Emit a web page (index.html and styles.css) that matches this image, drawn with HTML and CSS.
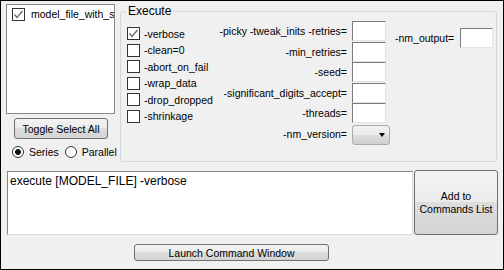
FILE: index.html
```html
<!DOCTYPE html>
<html lang="en">

<head>
    <meta charset="UTF-8">
    <title>Execute</title>
    <link rel="stylesheet" href="styles.css">
</head>

<body>
    <div class="window">
        <div class="top">
            <div class="side">
                <div class="listbox">
                    <div class="list-item">
                        <span class="check on"><svg width="11" height="11" viewBox="0 0 11 11"><polyline points="1.5,5.5 4,8.5 9.5,2" fill="none" stroke="#6b6b6b" stroke-width="1.3"/></svg></span>
                        <span>model_file_with_spaces</span>
                    </div>
                </div>
                <button class="btn toggle">Toggle Select All</button>
                <div class="radios">
                    <label class="radio"><span class="dot on"></span>Series</label>
                    <label class="radio"><span class="dot"></span>Parallel</label>
                </div>
            </div>

            <fieldset class="group">
                <legend>Execute</legend>
                <div class="group-body">
                    <div class="opts">
                        <div class="opt"><span class="check on"><svg width="11" height="11" viewBox="0 0 11 11"><polyline points="1.5,5.5 4,8.5 9.5,2" fill="none" stroke="#6b6b6b" stroke-width="1.3"/></svg></span>-verbose</div>
                        <div class="opt"><span class="check"></span>-clean=0</div>
                        <div class="opt"><span class="check"></span>-abort_on_fail</div>
                        <div class="opt"><span class="check"></span>-wrap_data</div>
                        <div class="opt"><span class="check"></span>-drop_dropped</div>
                        <div class="opt"><span class="check"></span>-shrinkage</div>
                    </div>
                    <div class="params">
                        <span class="plabel">-picky -tweak_inits -retries=</span><input class="field" type="text">
                        <span class="plabel">-min_retries=</span><input class="field" type="text">
                        <span class="plabel">-seed=</span><input class="field" type="text">
                        <span class="plabel">-significant_digits_accept=</span><input class="field" type="text">
                        <span class="plabel">-threads=</span><input class="field" type="text">
                        <span class="plabel">-nm_version=</span>
                        <div class="select"><span class="arrow"></span></div>
                    </div>
                    <div class="nm-out">
                        <span>-nm_output=</span><input class="field" type="text">
                    </div>
                </div>
            </fieldset>
        </div>

        <div class="command">
            <textarea class="cmd-text" readonly>execute [MODEL_FILE] -verbose</textarea>
            <button class="btn add">Add to<br>Commands List</button>
        </div>

        <div class="launch-row">
            <button class="btn launch">Launch Command Window</button>
        </div>
    </div>
</body>

</html>
```

FILE: styles.css
```css
* {
    box-sizing: border-box;
}

body {
    margin: 0;
    font-family: "Liberation Sans", Arial, sans-serif;
    font-size: 10.5px;
    color: #000;
}

.window {
    width: 504px;
    height: 270px;
    border: 1px solid #000;
    background-color: #f0f0f0;
    padding: 3px 5px 0 5px;
}

.top {
    display: flex;
    height: 158px;
}

.side {
    width: 109px;
    flex: none;
}

.listbox {
    height: 110px;
    border: 1px solid #828790;
    background-color: #fff;
    padding: 3px 0 0 5px;
    overflow: hidden;
}

.list-item {
    display: flex;
    align-items: center;
    gap: 6px;
    white-space: nowrap;
    line-height: 13px;
}

.check {
    width: 13px;
    height: 13px;
    flex: none;
    border: 1px solid #333;
    background-color: #fff;
    display: inline-flex;
    align-items: center;
    justify-content: center;
}

.btn {
    border: 1px solid #707070;
    border-radius: 3px;
    background: linear-gradient(#f3f3f3, #ebebeb 50%, #dddddd 50%, #d3d3d3);
    font-family: inherit;
    font-size: 10.5px;
    color: #000;
    padding: 0;
}

.toggle {
    display: block;
    margin: 4px 0 0 8px;
    width: 94px;
    height: 21px;
}

.radios {
    display: flex;
    margin: 7px 0 0 6px;
    white-space: nowrap;
}

.radio {
    display: flex;
    align-items: center;
    gap: 5px;
    line-height: 12px;
    margin-right: 6px;
}

.dot {
    width: 12px;
    height: 12px;
    border-radius: 50%;
    border: 1px solid #333;
    background-color: #fff;
}

.dot.on {
    background: radial-gradient(circle, #111 0 2.6px, #fff 3.2px);
}

.group {
    margin: 0 0 0 5px;
    padding: 0;
    width: 377px;
    height: 158px;
    min-width: 0;
    border: 1px solid #d5d5d5;
    border-radius: 3px;
}

.group legend {
    font-size: 12px;
    line-height: 14px;
    margin-left: 5px;
    padding: 0 2px;
}

.group-body {
    display: flex;
    align-items: flex-start;
}

.opts {
    width: 88px;
    margin: 9px 0 0 6px;
    white-space: nowrap;
}

.opt {
    display: flex;
    align-items: center;
    gap: 4px;
    height: 13px;
    margin-bottom: 3.6px;
}

.params {
    display: grid;
    grid-template-columns: 132px 34px;
    column-gap: 5px;
    row-gap: 0.6px;
    align-items: center;
    margin-top: 3px;
}

.plabel {
    justify-self: end;
    white-space: nowrap;
}

.field {
    width: 34px;
    height: 20px;
    padding: 0;
    border: 1px solid;
    border-color: #7a7a7a #e3e3e3 #e3e3e3 #7a7a7a;
    background-color: #fff;
    font: inherit;
}

.select {
    width: 38px;
    height: 20px;
    margin-top: 1px;
    border: 1px solid #acacac;
    border-radius: 3px;
    background: linear-gradient(#f2f2f2, #ebebeb 50%, #dddddd 50%, #cfcfcf);
    display: flex;
    align-items: center;
    justify-content: flex-end;
    padding-right: 4px;
}

.arrow {
    width: 0;
    height: 0;
    border-left: 3.5px solid transparent;
    border-right: 3.5px solid transparent;
    border-top: 4px solid #000;
}

.nm-out {
    display: flex;
    align-items: center;
    gap: 6px;
    margin: 10px 0 0 9px;
    white-space: nowrap;
}

.nm-out .field {
    width: 33px;
}

.command {
    display: flex;
    align-items: flex-start;
    margin-top: 8px;
}

.cmd-text {
    width: 406px;
    height: 64px;
    margin: 1px 0 0 1px;
    padding: 2px;
    border: 1px solid;
    border-color: #828790 #dadada #dadada #828790;
    background-color: #fff;
    font-family: "Liberation Sans", Arial, sans-serif;
    font-size: 12px;
    line-height: 14px;
    resize: none;
    overflow: hidden;
    outline: none;
}

.add {
    width: 84px;
    height: 65px;
    margin-left: 1px;
    line-height: 13px;
}

.launch-row {
    margin-top: 9px;
}

.launch {
    margin-left: 128px;
    width: 195px;
    height: 17px;
}
```
